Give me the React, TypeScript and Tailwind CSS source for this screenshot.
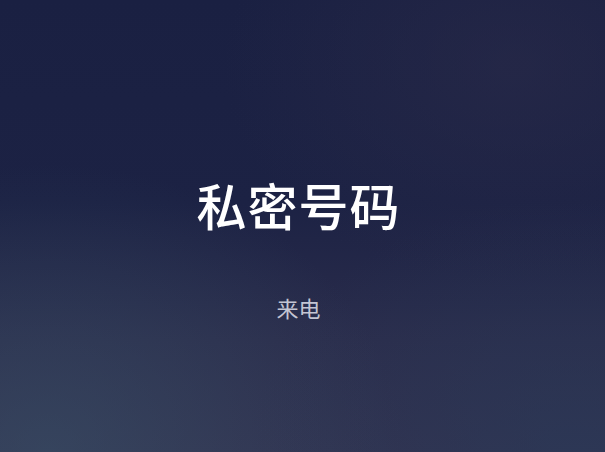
import React from 'react';

const App: React.FC = () => {
    return (
        <div
            className="relative w-full h-[452px] overflow-hidden bg-[#1b2141] bg-[linear-gradient(180deg,#1a2042_0%,#1c2244_45%,#2b2d4c_75%,#313250_100%)]"
            style={{ fontFamily: '"Noto Sans CJK SC", "Noto Sans", sans-serif' }}
        >
            <div className="absolute inset-0 bg-[radial-gradient(ellipse_at_8%_100%,rgba(60,90,110,0.45)_0%,rgba(60,90,110,0)_45%)]" />
            <div className="absolute inset-0 bg-[radial-gradient(ellipse_at_95%_100%,rgba(40,60,90,0.5)_0%,rgba(40,60,90,0)_40%)]" />
            <div className="absolute inset-0 bg-[radial-gradient(ellipse_at_85%_15%,rgba(45,45,75,0.5)_0%,rgba(45,45,75,0)_40%)]" />
            <div className="relative flex flex-col items-center pt-[172px] pr-[8px]">
                <h1 className="text-[50px] leading-[64px] font-medium text-white tracking-[1px]">私密号码</h1>
                <p className="mt-[56px] text-[22px] leading-[30px] text-[#c4c5d3]">来电</p>
            </div>
        </div>
    );
};

export default App;
